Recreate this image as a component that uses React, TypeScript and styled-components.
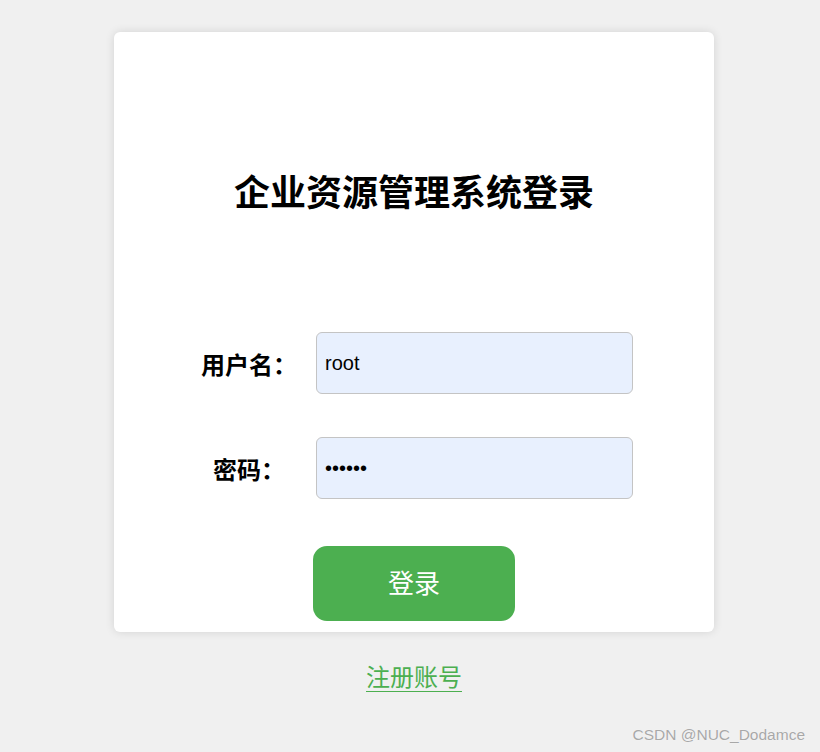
import React from 'react';
import styled, { createGlobalStyle } from 'styled-components';

const GlobalStyle = createGlobalStyle`
  html, body {
    margin: 0;
    padding: 0;
    background: #f0f0f0;
    font-family: "Liberation Sans", "Noto Sans CJK SC", sans-serif;
  }
`;

const Page = styled.div`
  position: relative;
  width: 820px;
  height: 752px;
  box-sizing: border-box;
  padding: 32px 0 0 8px;
  display: flex;
  flex-direction: column;
  align-items: center;
  overflow: hidden;
`;

const Card = styled.div`
  width: 600px;
  height: 600px;
  box-sizing: border-box;
  background: #fff;
  border-radius: 6px;
  box-shadow: 0 0 10px rgba(0, 0, 0, 0.12);
  display: flex;
  flex-direction: column;
  align-items: center;
  padding-top: 134px;
`;

const Title = styled.h1`
  margin: 0 0 118px;
  font-family: "Noto Sans CJK SC", sans-serif;
  font-size: 36px;
  line-height: 48px;
  font-weight: 700;
  color: #000;
`;

const Row = styled.div<{ $gap: number }>`
  display: flex;
  align-items: center;
  margin-bottom: ${p => p.$gap}px;
  margin-left: 4px;
`;

const Label = styled.label`
  width: 100px;
  margin-right: 17px;
  text-align: center;
  font-family: "Noto Sans CJK SC", sans-serif;
  font-size: 24px;
  font-weight: 700;
  color: #000;
`;

const Input = styled.input`
  width: 317px;
  height: 62px;
  box-sizing: border-box;
  padding: 0 8px;
  border: 1px solid #c4c4c4;
  border-radius: 6px;
  background: #e8f0fe;
  font-family: "Liberation Sans", sans-serif;
  font-size: 20px;
  color: #000;
  outline: none;
`;

const Button = styled.button`
  width: 202px;
  height: 75px;
  padding: 0 0 4px;
  border: none;
  border-radius: 14px;
  background: #4caf50;
  color: #fff;
  font-family: "Noto Sans CJK SC", sans-serif;
  font-size: 26px;
  cursor: pointer;
`;

const RegisterLink = styled.a`
  margin-top: 28px;
  font-family: "Noto Sans CJK SC", sans-serif;
  font-size: 24px;
  line-height: 32px;
  color: #4caf50;
  text-decoration: underline;
  text-underline-offset: 5px;
  text-decoration-thickness: 1px;
  cursor: pointer;
`;

const Watermark = styled.div`
  position: absolute;
  right: 15px;
  bottom: 8px;
  font-family: "Liberation Sans", sans-serif;
  font-size: 15.5px;
  color: #a8a8a8;
  text-shadow: 0 0 1px #fff;
`;

export default function App() {
  return (
    <>
      <GlobalStyle />
      <Page>
        <Card>
          <Title>企业资源管理系统登录</Title>
          <Row $gap={43}>
            <Label htmlFor="username">用户名：</Label>
            <Input id="username" type="text" defaultValue="root" />
          </Row>
          <Row $gap={47}>
            <Label htmlFor="password">密码：</Label>
            <Input id="password" type="password" defaultValue="123456" />
          </Row>
          <Button>登录</Button>
        </Card>
        <RegisterLink>注册账号</RegisterLink>
        <Watermark>CSDN @NUC_Dodamce</Watermark>
      </Page>
    </>
  );
}
